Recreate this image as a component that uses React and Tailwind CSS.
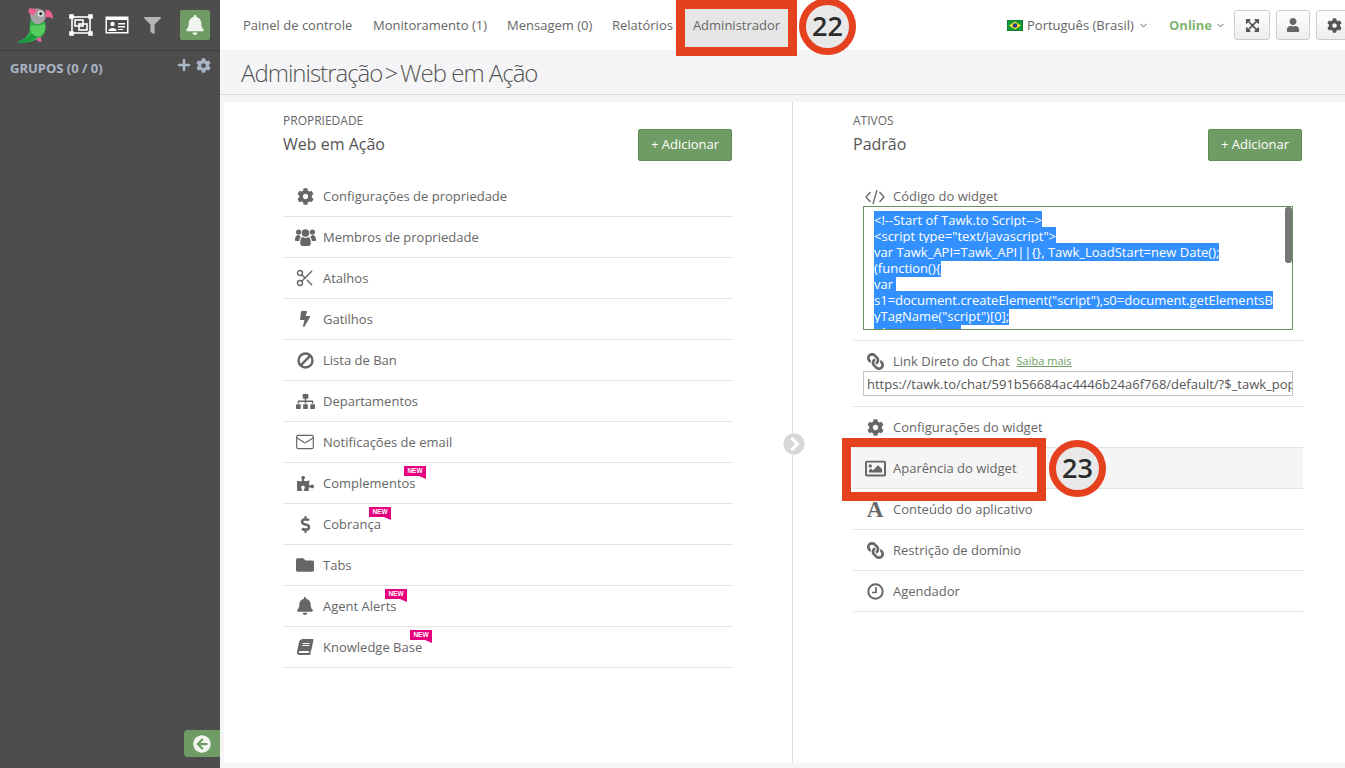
import React from "react";
import {
  FaCog, FaBolt, FaSitemap, FaPuzzlePiece, FaDollarSign,
  FaFolder, FaBell, FaBook, FaLink, FaRegImage, FaExpandArrowsAlt,
  FaUser, FaPlus, FaFilter, FaChevronCircleRight, FaArrowCircleLeft,
} from "react-icons/fa";
import { ChevronDown, Mail, Scissors } from "lucide-react";

function UsersIcon() {
  return (
    <svg width="21" height="18" viewBox="0 0 21 18" fill="currentColor">
      <circle cx="3.6" cy="4" r="2.6" />
      <circle cx="17.4" cy="4" r="2.6" />
      <circle cx="10.5" cy="5" r="3.8" />
      <path d="M0 12 C0 8 2 7 4 7 C4.8 8 5.4 8.6 6 9 C4.8 10 4.2 11.4 4.2 13 L1.4 13 C0.5 13 0 12.6 0 12 Z" />
      <path d="M21 12 C21 8 19 7 17 7 C16.2 8 15.6 8.6 15 9 C16.2 10 16.8 11.4 16.8 13 L19.6 13 C20.5 13 21 12.6 21 12 Z" />
      <path d="M5.2 15.2 C5.2 11 6.4 9 7.8 9 C9.6 10.2 11.4 10.2 13.2 9 C14.6 9 15.8 11 15.8 15.2 C15.8 17 14.8 18 13.4 18 L7.6 18 C6.2 18 5.2 17 5.2 15.2 Z" />
    </svg>
  );
}

function BanIcon() {
  return (
    <svg width="17" height="17" viewBox="0 0 17 17" fill="none" stroke="currentColor" strokeWidth="2.4">
      <circle cx="8.5" cy="8.5" r="7" />
      <path d="M3.6 13.4 L13.4 3.6" />
    </svg>
  );
}

function ClockIcon() {
  return (
    <svg width="17" height="17" viewBox="0 0 17 17" fill="none" stroke="currentColor">
      <circle cx="8.5" cy="8.5" r="7.2" strokeWidth="2" />
      <path d="M9 4 L9 9.5 L5 9.5" strokeWidth="1.7" />
    </svg>
  );
}

function CodeIcon() {
  return (
    <svg width="20" height="16" viewBox="0 0 20 16" fill="none" stroke="currentColor" strokeWidth="1.3">
      <path d="M5.5 3 L1 8 L5.5 13" />
      <path d="M12 1 L8 15" />
      <path d="M14.5 3 L19 8 L14.5 13" />
    </svg>
  );
}

function SerifA() {
  return <span aria-hidden="true" className="font-['Liberation_Serif',serif] text-[23px] leading-none font-bold">A</span>;
}

const propertyItems = [
  { icon: <FaCog size={17} />, label: "Configurações de propriedade" },
  { icon: <UsersIcon />, label: "Membros de propriedade" },
  { icon: <Scissors size={20} strokeWidth={1.7} />, label: "Atalhos" },
  { icon: <FaBolt size={16} />, label: "Gatilhos" },
  { icon: <BanIcon />, label: "Lista de Ban" },
  { icon: <FaSitemap size={19} />, label: "Departamentos" },
  { icon: <Mail size={20} strokeWidth={1.4} />, label: "Notificações de email" },
  { icon: <FaPuzzlePiece size={17} />, label: "Complementos", badge: "left-[121px]" },
  { icon: <FaDollarSign size={17} />, label: "Cobrança", badge: "left-[86px]" },
  { icon: <FaFolder size={18} />, label: "Tabs" },
  { icon: <FaBell size={18} />, label: "Agent Alerts", badge: "left-[102px]" },
  { icon: <FaBook size={16} className="-skew-x-12" />, label: "Knowledge Base", badge: "left-[127px]" },
];

const widgetItems = [
  { icon: <FaCog size={17} />, label: "Configurações do widget" },
  { icon: <FaRegImage size={21} />, label: "Aparência do widget", active: true },
  { icon: <SerifA />, label: "Conteúdo do aplicativo" },
  { icon: <FaLink size={17} className="-scale-x-100" />, label: "Restrição de domínio" },
  { icon: <ClockIcon />, label: "Agendador" },
];

const codeLines = [
  "<!--Start of Tawk.to Script-->",
  '<script type="text/javascript">',
  "var Tawk_API=Tawk_API||{}, Tawk_LoadStart=new Date();",
  "(function(){",
  "var ",
  's1=document.createElement("script"),s0=document.getElementsB',
  'yTagName("script")[0];',
  "s1.async=true;",
];

function Parrot() {
  return (
    <svg width="36" height="37" viewBox="0 0 38 39" className="shrink-0">
      <path d="M0 36 C6 35 10 31 12 26 L13 14 L28 15 C31 22 29 30 22 33 C16 37 8 38 0 38 Z" fill="#2fae4a" />
      <path d="M0 36 C7 35 12 32 16 27 L20 31 C15 36 8 38 0 38 Z" fill="#1c9a3e" />
      <path d="M13 20 C19 19 25 20 28 17 C30 23 27 30 21 31 C16 31 12 26 13 20 Z" fill="#57cc5e" />
      <path d="M19 33 L24 32 L25 37 L21 36 Z" fill="#e8679a" />
      <path d="M12 3 C20 0 28 2 29 8 C30 13 27 17 22 18 C17 19 13 14 13 9 Z" fill="#a3a3a3" />
      <path d="M12 1 L21 3 L16 9 L11 6 Z" fill="#ee5e93" />
      <path d="M29 3 C34 3 37 6 37 13 C34 10 32 10 29 11 Z" fill="#ee5e93" />
      <circle cx="24" cy="7" r="3.2" fill="#e6e6e6" />
      <circle cx="24" cy="7" r="1.7" fill="#333" />
    </svg>
  );
}

function SelectIcon() {
  return (
    <svg width="24" height="22" viewBox="0 0 24 22" fill="none" stroke="#fff" strokeWidth="1.6">
      <rect x="3" y="3" width="18" height="16" />
      <rect x="1" y="1" width="3" height="3" fill="#fff" />
      <rect x="20" y="1" width="3" height="3" fill="#fff" />
      <rect x="1" y="18" width="3" height="3" fill="#fff" />
      <rect x="20" y="18" width="3" height="3" fill="#fff" />
      <rect x="6" y="6" width="8" height="6" />
      <rect x="10" y="10" width="8" height="6" />
    </svg>
  );
}

function CardIcon() {
  return (
    <svg width="24" height="18" viewBox="0 0 24 18">
      <rect x="0.5" y="0.5" width="23" height="17" fill="#fff" />
      <rect x="2" y="4" width="20" height="12" fill="#4d4d4d" />
      <circle cx="7.5" cy="8" r="2.2" fill="#fff" />
      <path d="M3.5 15 C3.5 11 11.5 11 11.5 15 Z" fill="#fff" />
      <rect x="13" y="7" width="7" height="1.5" fill="#fff" />
      <rect x="13" y="10" width="7" height="1.5" fill="#fff" />
      <rect x="13" y="13" width="5" height="1" fill="#fff" />
    </svg>
  );
}

function Flag() {
  return (
    <svg width="16" height="11" viewBox="0 0 16 11" className="shrink-0">
      <rect width="16" height="11" fill="#129a3a" stroke="#0c5c24" />
      <path d="M8 1.5 L14 5.5 L8 9.5 L2 5.5 Z" fill="#f4dc2c" />
      <circle cx="8" cy="5.5" r="2.2" fill="#1d3f94" />
    </svg>
  );
}

function NewBadge({ className }) {
  return (
    <span className={`absolute top-[3px] flex h-[10px] w-[22px] items-center justify-center bg-[#e6007e] font-['Liberation_Sans',sans-serif] text-[6.5px] leading-none font-bold text-white ${className}`}>
      NEW
      <span className="absolute top-[10px] right-0 h-0 w-0 border-t-[3px] border-l-[7px] border-t-[#e6007e] border-l-transparent" />
    </span>
  );
}

function IconSlot({ children }) {
  return (
    <span className="flex w-[40px] shrink-0 items-center justify-center pr-[4px] pl-[8px] text-[#666]">
      {children}
    </span>
  );
}

function Row({ item }) {
  return (
    <div className={`relative flex h-[41px] items-center border-b border-[#e3e3e3] text-[13px] text-[#666] ${item.active ? "bg-[#f5f5f5]" : ""}`}>
      <IconSlot>{item.icon}</IconSlot>
      <span className="pt-[2px]">{item.label}</span>
      {item.badge && <NewBadge className={item.badge} />}
    </div>
  );
}

function PaneHeader({ small, title }) {
  return (
    <div className="flex h-[74px] items-start justify-between pr-[1px]">
      <div className="pt-[10px]">
        <div className="text-[12px] leading-[17px] text-[#666]">{small}</div>
        <div className="mt-[4px] text-[16px] leading-[22px] text-[#555]">{title}</div>
      </div>
      <button className="mt-[27px] h-[32px] w-[94px] rounded-[2px] border border-[#5f8c55] bg-[#6f9c64] text-[13px] text-white">
        + Adicionar
      </button>
    </div>
  );
}

function Callout({ value, className }) {
  return (
    <div className={`absolute flex h-[57px] w-[57px] items-center justify-center rounded-full border-[7px] border-[#e5411f] bg-[#e8e8e8] text-[27px] font-semibold text-[#2b2b2b] ${className}`}>
      {value}
    </div>
  );
}

function ToolButton({ width, children }) {
  return (
    <span className={`flex h-[30px] items-center justify-center rounded-[3px] border border-[#ccc] bg-linear-to-b from-white to-[#eee] ${width}`}>
      {children}
    </span>
  );
}

export default function App() {
  return (
    <div className="relative flex h-[768px] w-[1345px] overflow-hidden bg-[#f5f5f7] font-['Open_Sans',sans-serif]">
      {/* Sidebar */}
      <aside className="flex w-[220px] shrink-0 flex-col bg-[#4d4d4d]">
        <div className="flex h-[51px] items-center border-b border-[#3c3c3c] pl-[18px]">
          <Parrot />
          <span className="ml-[15px]"><SelectIcon /></span>
          <span className="ml-[12px]"><CardIcon /></span>
          <FaFilter size={17} className="ml-[15px] text-[#b5b5b5]" />
          <span className="ml-[19px] flex h-[30px] w-[30px] items-center justify-center rounded-[2px] bg-[#6f9c64]">
            <FaBell size={20} className="text-[#f0f4ee]" />
          </span>
        </div>
        <div className="flex items-center justify-between pt-[5px] pr-[9px] pl-[10px]">
          <span className="pt-[3px] text-[13px] font-bold text-[#a9b5c7]">GRUPOS (0 / 0)</span>
          <span className="flex items-center gap-[5px] pb-[4px] text-[#a9b5c7]">
            <FaPlus size={14} />
            <FaCog size={15} />
          </span>
        </div>
        <div className="mt-auto mb-[11px] flex justify-end">
          <div className="flex h-[27px] w-[36px] items-center justify-center rounded-l-[4px] bg-[#6f9c64]">
            <FaArrowCircleLeft size={18} className="text-[#f2f6f0]" />
          </div>
        </div>
      </aside>

      <div className="flex w-[1125px] shrink-0 flex-col">
        {/* Top nav */}
        <header className="flex h-[50px] shrink-0 items-center bg-white text-[13px] text-[#666]">
          <nav className="flex h-full w-[787px] shrink-0 items-center pt-[2px] pl-[23px]">
            <span className="w-[130px]">Painel de controle</span>
            <span className="w-[134px]">Monitoramento (1)</span>
            <span className="w-[105px]">Mensagem (0)</span>
            <span className="w-[73px]">Relatórios</span>
            <span className="flex h-full w-[104px] items-center justify-center bg-[#e6e6e6] pr-[1px]">Administrador</span>
          </nav>
          <span className="flex w-[162px] shrink-0 items-center gap-[4px]">
            <Flag />
            <span className="pt-[2px]">Português (Brasil)</span>
            <ChevronDown size={11} strokeWidth={2} className="text-[#555]" />
          </span>
          <span className="flex w-[65px] shrink-0 items-center gap-[3px] font-bold text-[#7eb56f]">
            <span className="pt-[2px]">Online</span>
            <ChevronDown size={11} strokeWidth={2} className="text-[#555]" />
          </span>
          <span className="flex shrink-0 gap-[6px]">
            <ToolButton width="w-[36px]"><FaExpandArrowsAlt size={15} className="text-[#555]" /></ToolButton>
            <ToolButton width="w-[34px]"><FaUser size={14} className="text-[#666]" /></ToolButton>
            <ToolButton width="w-[36px]"><FaCog size={15} className="text-[#555]" /></ToolButton>
          </span>
        </header>

        {/* Breadcrumb */}
        <div className="flex h-[45px] shrink-0 items-center border-b border-[#dcdcdc] pt-[1px] pl-[21px] text-[24px] font-light tracking-[-1px] text-[#555]">
          <span>Administração</span>
          <span className="ml-[2px]">&gt;</span>
          <span className="ml-[3px]">Web em Ação</span>
        </div>

        {/* Panes */}
        <main className="mt-[7px] ml-[4px] flex h-[661px] w-[1121px] bg-white">
          <section className="w-[569px] shrink-0 border-r border-[#dcdcdc] pr-[59px] pl-[59px]">
            <PaneHeader small="PROPRIEDADE" title="Web em Ação" />
            {propertyItems.map((item) => <Row key={item.label} item={item} />)}
          </section>
          <section className="relative flex-1 pr-[42px] pl-[60px]">
            <FaChevronCircleRight size={22} className="absolute top-[331px] left-[-10px] rounded-full bg-white text-[#d8d8d8]" />
            <PaneHeader small="ATIVOS" title="Padrão" />
            <div className="h-[165px] border-b border-[#e3e3e3] pt-[11px]">
              <div className="flex h-[19px] items-center text-[13px] text-[#666]">
                <IconSlot><CodeIcon /></IconSlot>
                Código do widget
              </div>
              <div className="relative ml-[10px] h-[124px] w-[430px] overflow-hidden border border-[#6b8f5e] pt-[5px] pl-[10px] text-[13px] leading-[16px] text-white">
                {codeLines.map((line) => (
                  <div key={line}>
                    <span className="whitespace-pre bg-[#3390ff]">{line}</span>
                  </div>
                ))}
                <span className="absolute top-0 right-0 h-[56px] w-[7px] rounded-[3px] bg-[#777]" />
              </div>
            </div>
            <div className="h-[66px] border-b border-[#e3e3e3] pt-[11px]">
              <div className="flex h-[19px] items-center text-[13px] text-[#666]">
                <IconSlot><FaLink size={17} className="-scale-x-100" /></IconSlot>
                Link Direto do Chat
                <span className="ml-[7px] text-[11px] text-[#6f9c64] underline">Saiba mais</span>
              </div>
              <div className="ml-[10px] h-[25px] w-[430px] overflow-hidden border border-[#c4c4c4] pl-[3px] text-[13px] leading-[24px] whitespace-nowrap text-[#555]">
                https://tawk.to/chat/591b56684ac4446b24a6f768/default/?$_tawk_popout=true
              </div>
            </div>
            {widgetItems.map((item) => <Row key={item.label} item={item} />)}
          </section>
        </main>
      </div>

      {/* Annotations */}
      <div className="absolute top-0 left-[676px] h-[56px] w-[121px] border-[9px] border-[#e5411f]" />
      <Callout value="22" className="top-[-2px] left-[799px]" />
      <div className="absolute top-[438px] left-[842px] h-[63px] w-[204px] border-[9px] border-[#e5411f]" />
      <Callout value="23" className="top-[440px] left-[1049px]" />
    </div>
  );
}
